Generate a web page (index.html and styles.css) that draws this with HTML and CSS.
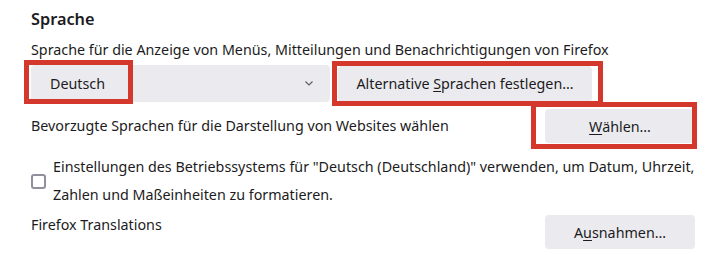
FILE: index.html
```html
<!DOCTYPE html>
<html lang="de">
<head>
    <meta charset="UTF-8" />
    <meta name="viewport" content="width=device-width, initial-scale=1.0" />
    <title>Sprache</title>
    <link rel="stylesheet" href="styles.css">
</head>

<body>
    <div class="pane">
        <!-- Language section -->
        <h2>Sprache</h2>
        <p class="desc">Sprache für die Anzeige von Menüs, Mitteilungen und Benachrichtigungen von Firefox</p>

        <div class="row lang-row">
            <div class="select">
                <span>Deutsch</span>
                <svg class="chevron" width="8" height="5" viewBox="0 0 8 5">
                    <path d="M0.5 0.5 L4 4 L7.5 0.5" fill="none" stroke="#5b5b66" stroke-width="1.1" />
                </svg>
                <span class="mark mark-select"></span>
            </div>
            <button class="btn btn-alt">Alternative <u>S</u>prachen festlegen…<span class="mark mark-alt"></span></button>
        </div>

        <div class="row split">
            <span class="label">Bevorzugte Sprachen für die Darstellung von Websites wählen</span>
            <button class="btn"><u>W</u>ählen…<span class="mark mark-choose"></span></button>
        </div>

        <label class="check-row">
            <span class="box"></span>
            <span class="check-text">Einstellungen des Betriebssystems für "Deutsch (Deutschland)" verwenden, um Datum, Uhrzeit, Zahlen und Maßeinheiten zu formatieren.</span>
        </label>

        <div class="row split top">
            <span class="label">Firefox Translations</span>
            <button class="btn">A<u>u</u>snahmen…</button>
        </div>
    </div>
</body>
</html>
```

FILE: styles.css
```css
/* Basic reset */
body {
    margin: 0;
    padding: 0;
    background: #fff;
    color: #1c1b22;
    font-family: "Noto Sans", Arial, sans-serif;
    font-size: 14.3px;
}

/* Settings pane */
.pane {
    padding: 9px 10px 0 31px;
}

h2 {
    margin: 0;
    font-size: 16.3px;
    font-weight: 600;
    line-height: 20px;
}

.desc {
    margin: 11px 0 0;
    line-height: 20px;
}

/* Rows */
.row {
    display: flex;
    align-items: center;
}

.lang-row {
    margin-top: 5px;
    gap: 8px;
}

.split {
    justify-content: space-between;
    margin-top: 7px;
}

.split.top {
    align-items: flex-start;
    margin-top: 6px;
}

.label {
    line-height: 20px;
}

/* Fake select */
.select {
    position: relative;
    box-sizing: border-box;
    width: 299px;
    height: 37px;
    padding: 0 17px 0 19px;
    display: flex;
    align-items: center;
    justify-content: space-between;
    background: #ebebef;
    border-radius: 4px;
}

/* Buttons */
.btn {
    position: relative;
    box-sizing: border-box;
    min-width: 150px;
    height: 34px;
    padding: 0 17px;
    border: none;
    border-radius: 4px;
    background: #ebebef;
    color: #1c1b22;
    font: inherit;
}

.btn u {
    text-underline-offset: 2px;
}

.btn-alt {
    height: 36px;
    width: 254px;
}

/* Checkbox row */
.check-row {
    display: flex;
    align-items: center;
    gap: 7px;
    margin-top: 10px;
    line-height: 28px;
}

.box {
    flex: none;
    width: 15px;
    height: 15px;
    box-sizing: border-box;
    border: 2px solid #8f8f9d;
    border-radius: 3px;
}

/* Red annotation frames */
.mark {
    position: absolute;
    border: 5px solid #d4372c;
    pointer-events: none;
}

.mark-select {
    left: -7px;
    top: -5px;
    width: 99px;
    height: 34px;
}

.mark-alt {
    left: -6px;
    top: -5px;
    width: 261px;
    height: 35px;
}

.mark-choose {
    left: -14px;
    top: -7px;
    width: 156px;
    height: 37px;
}
```
